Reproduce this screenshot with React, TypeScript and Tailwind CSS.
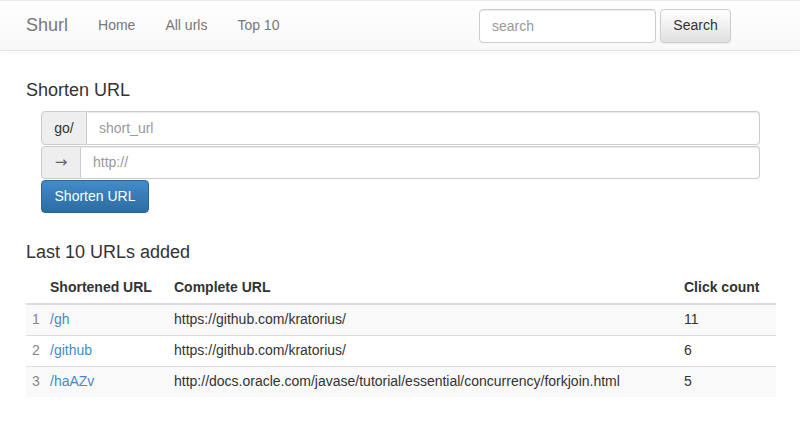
const rows = [
  { n: 1, short: "/gh", url: "https://github.com/kratorius/", clicks: 11 },
  { n: 2, short: "/github", url: "https://github.com/kratorius/", clicks: 6 },
  { n: 3, short: "/haAZv", url: "http://docs.oracle.com/javase/tutorial/essential/concurrency/forkjoin.html", clicks: 5 },
];

export default function App() {
  return (
    <div className="min-h-[437px] bg-white text-[14px] text-[#333] font-['Liberation_Sans',Arial,sans-serif]">
      {/* Navbar */}
      <nav className="h-[51px] border-t border-b border-[#e7e7e7] bg-gradient-to-b from-white to-[#f8f8f8] shadow-[0_1px_5px_rgba(0,0,0,0.04)] flex items-center px-[26px]">
        <a className="text-[18px] text-[#777] mr-[30px]">Shurl</a>
        <ul className="flex gap-[30px] text-[#777]">
          <li>Home</li>
          <li>All urls</li>
          <li>Top 10</li>
        </ul>
        <form className="ml-auto mr-[43px] flex gap-[4px]">
          <input
            placeholder="search"
            className="w-[177px] h-[34px] px-[12px] border border-[#ccc] rounded-[4px] bg-white placeholder:text-[#999] shadow-[inset_0_1px_1px_rgba(0,0,0,0.075)] outline-none"
          />
          <button className="h-[34px] w-[71px] border border-[#ccc] rounded-[4px] bg-gradient-to-b from-white to-[#e0e0e0] text-[#333] shadow-[0_1px_0_rgba(0,0,0,0.05)]">
            Search
          </button>
        </form>
      </nav>

      <main className="px-[26px]">
        <h4 className="text-[18px] mt-[28px] mb-[10px] leading-[22px]">Shorten URL</h4>
        <div className="ml-[15px] mr-[14px] flex flex-col gap-[1px]">
          <div className="flex h-[34px]">
            <span className="w-[46px] flex items-center justify-center bg-[#eee] border border-[#ccc] rounded-l-[4px]">go/</span>
            <input
              placeholder="short_url"
              className="flex-1 px-[12px] border border-l-0 border-[#ccc] rounded-r-[4px] placeholder:text-[#999] shadow-[inset_0_1px_1px_rgba(0,0,0,0.075)] outline-none"
            />
          </div>
          <div className="flex h-[33px]">
            <span className="w-[40px] flex items-center justify-center bg-[#eee] border border-[#ccc] rounded-l-[4px] text-[15px] text-[#666] font-['DejaVu_Sans',sans-serif]">→</span>
            <input
              placeholder="http://"
              className="flex-1 px-[12px] border border-l-0 border-[#ccc] rounded-r-[4px] placeholder:text-[#999] shadow-[inset_0_1px_1px_rgba(0,0,0,0.075)] outline-none"
            />
          </div>
          <div>
            <button className="h-[33px] w-[108px] text-white border border-[#2b669a] rounded-[4px] bg-gradient-to-b from-[#428bca] to-[#2d6ca2]">
              Shorten URL
            </button>
          </div>
        </div>

        <h4 className="text-[18px] mt-[28px] mb-[8px] leading-[22px]">Last 10 URLs added</h4>
        <table className="w-[750px] border-collapse">
          <thead>
            <tr className="h-[33px] border-b-2 border-[#ddd] font-bold text-left">
              <th className="w-[19px]"></th>
              <th className="w-[124px] px-[5px] text-left">Shortened URL</th>
              <th className="px-[5px] text-left">Complete URL</th>
              <th className="w-[97px] px-[5px] text-left">Click count</th>
            </tr>
          </thead>
          <tbody>
            {rows.map((r) => (
              <tr key={r.n} className={`h-[31px] border-t border-[#ddd] first:border-t-0 ${r.n % 2 === 1 ? "bg-[#f9f9f9]" : "bg-white"}`}>
                <td className="pl-[6px] text-[#888]">{r.n}</td>
                <td className="px-[5px] text-[#428bca]">{r.short}</td>
                <td className="px-[5px]">{r.url}</td>
                <td className="px-[5px]">{r.clicks}</td>
              </tr>
            ))}
          </tbody>
        </table>
      </main>
    </div>
  );
}
